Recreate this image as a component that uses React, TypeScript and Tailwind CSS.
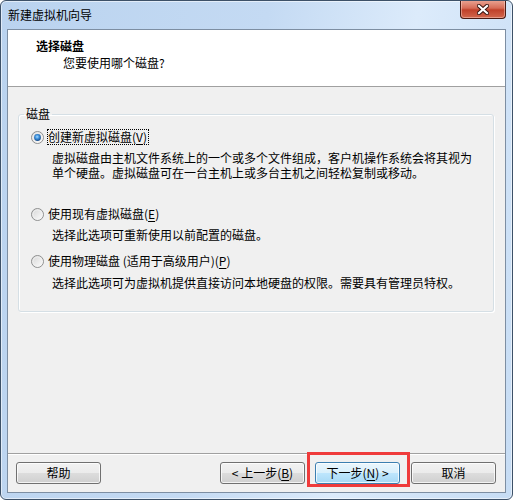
import React from 'react';

const font = "font-['Noto_Sans_CJK_SC',sans-serif]";

function Radio({ checked }: { checked?: boolean }) {
  return (
    <svg width="13" height="13" viewBox="0 0 13 13" className="shrink-0">
      <defs>
        <linearGradient id="rbFill" x1="0" y1="0" x2="1" y2="1">
          <stop offset="0" stopColor="#d4d4d4" />
          <stop offset="1" stopColor="#ffffff" />
        </linearGradient>
        <radialGradient id="rbDot" cx="0.45" cy="0.4" r="0.65">
          <stop offset="0" stopColor="#a6dbff" />
          <stop offset="0.45" stopColor="#3b8fdc" />
          <stop offset="1" stopColor="#0f3f7c" />
        </radialGradient>
      </defs>
      <circle cx="6.5" cy="6.5" r="6" fill="url(#rbFill)" stroke="#8e8f8f" />
      <circle cx="6.5" cy="6.5" r="4.6" fill="none" stroke="#f3f3f3" strokeWidth="0.8" />
      {checked && <circle cx="6.5" cy="6.5" r="3.4" fill="url(#rbDot)" />}
    </svg>
  );
}

function Btn({ children, primary }: { children: React.ReactNode; primary?: boolean }) {
  return (
    <div
      className={`w-[85px] h-[22px] flex items-center justify-center rounded-[3px] border text-[12px] leading-none text-black shadow-[inset_0_0_0_1px_rgba(255,255,255,0.75)] ${
        primary
          ? 'border-[#3c7fb1] bg-[linear-gradient(#eaf6fd_0%,#d9f0fc_50%,#bee6fd_50%,#a7d9f5_100%)]'
          : 'border-[#707070] bg-[linear-gradient(#f2f2f2_0%,#ebebeb_50%,#dddddd_50%,#cfcfcf_100%)]'
      }`}
    >
      {children}
    </div>
  );
}

function U({ children }: { children: React.ReactNode }) {
  return <span className="underline underline-offset-2">{children}</span>;
}

export default function App() {
  return (
    <div
      className={`${font} w-[513px] h-[500px] flex flex-col overflow-hidden rounded-[6px] border border-[#3d5168] bg-[linear-gradient(100deg,#bad3ef_0%,#c4daf3_45%,#dcebfb_70%,#c6dcf4_100%)] shadow-[inset_0_0_0_1px_rgba(255,255,255,0.55)] text-[12px] text-black`}
    >
      {/* title bar */}
      <div className="h-[28px] shrink-0 flex items-start justify-between">
        <div className="pl-[7px] pt-[6px] leading-[16px] text-[12px]">新建虚拟机向导</div>
        <div className="-mt-px mr-[6px] w-[46px] h-[19px] flex items-center justify-center rounded-b-[4px] border border-[#4a1a12] border-t-0 bg-[linear-gradient(#eba796_0%,#d66c57_45%,#c0412a_55%,#d2674d_100%)] shadow-[inset_0_0_0_1px_rgba(255,220,210,0.45)]">
          <svg width="12" height="11" viewBox="0 0 12 11">
            <path d="M2 2 L10 9 M10 2 L2 9" stroke="#3a1510" strokeWidth="4.2" strokeLinecap="square" />
            <path d="M2 2 L10 9 M10 2 L2 9" stroke="#ffffff" strokeWidth="2.2" strokeLinecap="square" />
          </svg>
        </div>
      </div>

      {/* client area */}
      <div className="mx-[6px] h-[464px] shrink-0 flex flex-col border border-[#7d8ea2] bg-[#f0f0f0]">
        <div className="h-[57px] shrink-0 bg-white border-b border-[#a0a0a0]">
          <div className="pl-[28px] pt-[8px] leading-[16px] font-bold">选择磁盘</div>
          <div className="pl-[55px] mt-px leading-[16px]">您要使用哪个磁盘?</div>
        </div>

        <div className="flex-1 flex flex-col">
          <fieldset className="ml-[10px] mr-[11px] mt-[20px] h-[205px] rounded-[3px] border border-[#d5dfe5] px-0 pt-[8px] shadow-[inset_1px_1px_0_#ffffff,1px_1px_0_#ffffff]">
            <legend className="ml-[5px] px-[2px] leading-[14px]">磁盘</legend>

            <div className="flex items-center h-[16px] pl-[12px]">
              <Radio checked />
              <span className="ml-[3px] border border-dotted border-black leading-[14px] pr-px">
                创建新虚拟磁盘(<U>V</U>)
              </span>
            </div>
            <div className="pl-[33px] mt-[5px]">
              <div className="h-[15px] leading-[15px]">
                虚拟磁盘由主机文件系统上的一个或多个文件组成，客户机操作系统会将其视为
              </div>
              <div className="h-[15px] leading-[15px]">
                单个硬盘。虚拟磁盘可在一台主机上或多台主机之间轻松复制或移动。
              </div>
            </div>

            <div className="flex items-center h-[16px] pl-[12px] mt-[26px]">
              <Radio />
              <span className="ml-[3px] border border-transparent leading-[14px]">
                使用现有虚拟磁盘(<U>E</U>)
              </span>
            </div>
            <div className="pl-[33px] mt-[5px] leading-[15px]">选择此选项可重新使用以前配置的磁盘。</div>

            <div className="flex items-center h-[16px] pl-[12px] mt-[11px]">
              <Radio />
              <span className="ml-[3px] border border-transparent leading-[14px]">
                使用物理磁盘 (适用于高级用户)(<U>P</U>)
              </span>
            </div>
            <div className="pl-[33px] mt-[6px] leading-[15px]">
              选择此选项可为虚拟机提供直接访问本地硬盘的权限。需要具有管理员特权。
            </div>
          </fieldset>

          <div className="flex-1" />

          <div className="h-[2px] shrink-0 border-t border-[#a0a0a0] border-b border-b-white" />
          <div className="mt-[7px] mb-[8px] flex items-center pl-[8px] pr-[9px]">
            <Btn>帮助</Btn>
            <div className="flex-1" />
            <Btn>&lt; 上一步(<U>B</U>)</Btn>
            <div className="relative ml-[10px]">
              <Btn primary>
                下一步(<U>N</U>) &gt;
              </Btn>
              <span className="absolute -left-[8px] -top-[10px] w-[103px] h-[35px] border-[3px] border-[#ef3b3b] pointer-events-none" />
            </div>
            <div className="ml-[11px]">
              <Btn>取消</Btn>
            </div>
          </div>
        </div>
      </div>
    </div>
  );
}
